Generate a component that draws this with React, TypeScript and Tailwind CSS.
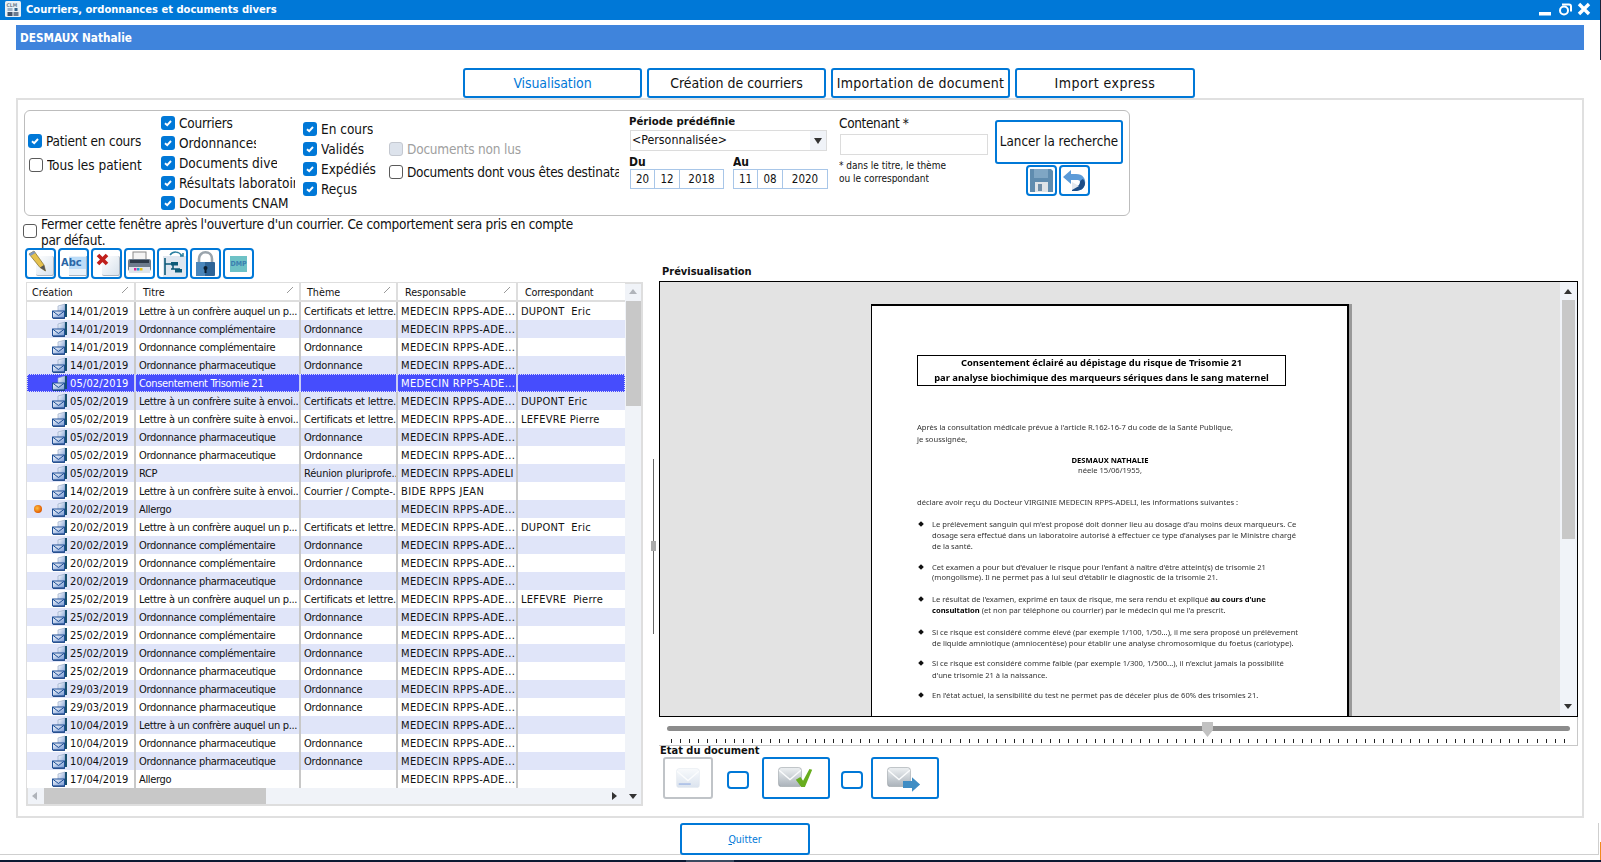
import React from "react";

type RowT = [string, string, string, string, string];
const L1 = "Lettre à un confrère auquel un p...";
const L2 = "Lettre à un confrère suite à envoi..";
const OC = "Ordonnance complémentaire";
const OP = "Ordonnance pharmaceutique";
const CE = "Certificats et lettre...";
const O = "Ordonnance";
const M = "MEDECIN RPPS-ADE...";
const rows: RowT[] = [
  ["14/01/2019", L1, CE, M, "DUPONT  Eric"],
  ["14/01/2019", OC, O, M, ""],
  ["14/01/2019", OC, O, M, ""],
  ["14/01/2019", OP, O, M, ""],
  ["05/02/2019", "Consentement Trisomie 21", "", M, ""],
  ["05/02/2019", L2, CE, M, "DUPONT Eric"],
  ["05/02/2019", L2, CE, M, "LEFEVRE Pierre"],
  ["05/02/2019", OP, O, M, ""],
  ["05/02/2019", OP, O, M, ""],
  ["05/02/2019", "RCP", "Réunion pluriprofe..", "MEDECIN RPPS-ADELI", ""],
  ["14/02/2019", L2, "Courrier / Compte-..", "BIDE RPPS JEAN", ""],
  ["20/02/2019", "Allergo", "", M, ""],
  ["20/02/2019", L1, CE, M, "DUPONT  Eric"],
  ["20/02/2019", OC, O, M, ""],
  ["20/02/2019", OC, O, M, ""],
  ["20/02/2019", OP, O, M, ""],
  ["25/02/2019", L1, CE, M, "LEFEVRE  Pierre"],
  ["25/02/2019", OC, O, M, ""],
  ["25/02/2019", OC, O, M, ""],
  ["25/02/2019", OC, O, M, ""],
  ["25/02/2019", OP, O, M, ""],
  ["29/03/2019", OP, O, M, ""],
  ["29/03/2019", OP, O, M, ""],
  ["10/04/2019", L1, "", M, ""],
  ["10/04/2019", OP, O, M, ""],
  ["10/04/2019", OP, O, M, ""],
  ["17/04/2019", "Allergo", "", M, ""],
];

function Cb({ className, on, disabled }: { className: string; on?: boolean; disabled?: boolean }) {
  const look = on
    ? "bg-[#0078d7]"
    : disabled
    ? "bg-[#dde3ec] border border-[#c4c8d0]"
    : "bg-white border border-[#5a5a5a]";
  return (
    <span className={`absolute w-[14px] h-[14px] rounded-[3px] flex items-center justify-center ${look} ${className}`}>
      {on && (
        <svg width="10" height="10" viewBox="0 0 10 10">
          <path d="M2 5.2 L4.2 7.2 L8 3" fill="none" stroke="#fff" strokeWidth="1.9" />
        </svg>
      )}
    </span>
  );
}

function Lb({ className, children }: { className: string; children: React.ReactNode }) {
  return <span className={`absolute whitespace-nowrap overflow-hidden ${className}`}>{children}</span>;
}

function MailIcon({ sel }: { sel?: boolean }) {
  const id = sel ? "mg1" : "mg0";
  return (
    <svg width="16" height="16" viewBox="0 0 16 16" className="absolute left-[25px] top-px">
      <defs>
        <linearGradient id={id} x1="0" y1="0" x2="1" y2="1">
          <stop offset="0" stopColor="#fff" />
          <stop offset="1" stopColor="#6f93d0" />
        </linearGradient>
      </defs>
      <path d="M6 3 L13 1 L13 13 L6 13 Z" fill={`url(#${id})`} stroke="#8aa0c0" strokeWidth="0.6" />
      <path d="M13 1 L15 1 L15 14 L13 14Z" fill="#174f6e" />
      <path d="M0.5 8 L12.5 8 L12.5 15 L0.5 15Z" fill={`url(#${id})`} stroke="#1e4f96" />
      <path d="M0.5 8 L6.5 12.5 L12.5 8" fill="none" stroke="#1e4f96" />
      <path d="M1 15.3 L13 15.3" stroke="#143f80" />
    </svg>
  );
}

function Row({ r, i }: { r: RowT; i: number }) {
  const sel = i === 4;
  const bg = sel ? "bg-[#464dfd] text-white" : i % 2 === 1 ? "bg-[#e0e5f9] text-[#111]" : "bg-white text-[#111]";
  const cell = "h-full overflow-hidden whitespace-pre border-r-[2px] shrink-0 " + (sel ? "border-[#c9ccf5]" : "border-[#c8c8c8]");
  return (
    <div className={`relative flex h-[18px] w-[598px] items-center leading-[19px] ${bg}`}>
      {sel && (
        <span className="absolute inset-0 border border-dotted border-white/80 pointer-events-none" />
      )}
      <div className={`${cell} relative w-[109px] pl-[43px] tracking-[0.15px]`}>
        {i === 11 && (
          <span className="absolute left-[7px] top-[5px] w-[8px] h-[8px] rounded-full bg-[radial-gradient(circle_at_40%_40%,#ffc040,#e05a00_70%,#a03000)]" />
        )}
        <MailIcon sel={sel} />
        {r[0]}
      </div>
      <div className={`${cell} w-[165px] pl-[3px] tracking-[-0.33px]`}>{r[1]}</div>
      <div className={`${cell} w-[97px] pl-[3px] tracking-[-0.2px]`}>{r[2]}</div>
      <div className={`${cell} w-[120px] pl-[3px] tracking-[0.35px]`}>{r[3]}</div>
      <div className="h-full w-[107px] pl-[3px] overflow-hidden whitespace-pre tracking-[0.25px]">{r[4]}</div>
    </div>
  );
}

function Env({ className, size = 24, pale }: { className?: string; size?: number; pale?: boolean }) {
  return (
    <svg width={size} height={size * 0.84} viewBox="0 0 44 37" className={className}>
      <defs>
        <linearGradient id={pale ? "ev1" : "ev0"} x1="0" y1="0" x2="0" y2="1">
          <stop offset="0" stopColor={pale ? "#f8fafc" : "#eef1f3"} />
          <stop offset="1" stopColor={pale ? "#dbe3ee" : "#aab2ba"} />
        </linearGradient>
      </defs>
      <rect x="1" y="1" width="42" height="35" rx="5" fill={`url(#${pale ? "ev1" : "ev0"})`} stroke={pale ? "#e2e7ee" : "#8f969c"} />
      <path d="M2 6 L22 23 L42 6" fill="none" stroke="#fbfcfd" strokeWidth="2.4" />
      {pale && <rect x="5" y="28" width="22" height="3" fill="#a9bee6" />}
    </svg>
  );
}

function Tool({ className, children }: { className: string; children: React.ReactNode }) {
  return (
    <div className={`absolute top-[248px] w-[31px] h-[31px] border-2 border-[#0078d7] rounded-[4px] bg-white overflow-hidden ${className}`}>
      {children}
    </div>
  );
}

const Sheet = () => (
  <span className="absolute left-[9px] top-[6px] w-[18px] h-[20px] rounded-[2px] bg-gradient-to-br from-white to-[#d8e2ec] border-r border-b border-[#aab4c0]" />
);

const P = ({ className, children }: { className: string; children: React.ReactNode }) => (
  <div className={`absolute whitespace-nowrap leading-[10px] ${className}`}>{children}</div>
);
const Bullet = ({ className }: { className: string }) => (
  <span className={`absolute left-[47px] w-[4px] h-[4px] rotate-45 bg-[#111] ${className}`} />
);

export default function App() {
  const ticks = Array.from({ length: 100 });
  return (
    <div className="relative w-[1601px] h-[862px] bg-white overflow-hidden text-[#111] [font-family:DejaVu_Sans_Condensed,DejaVu_Sans,sans-serif] [font-stretch:condensed]">
      {/* Title bar */}
      <div className="absolute left-0 top-0 w-[1600px] h-[20px] bg-[#0078d7]">
        <svg width="16" height="16" viewBox="0 0 16 16" className="absolute left-[5px] top-px">
          <rect width="16" height="16" rx="1.5" fill="#e8f0f6" />
          <text x="1.5" y="5.5" fontSize="5" fontWeight="700" fill="#708090">CLM</text>
          <rect x="2.5" y="11" width="5" height="4" fill="#44546a" />
          <rect x="8.5" y="11" width="5" height="4" fill="#6b7c90" />
          <rect x="2.5" y="7" width="5" height="3" fill="#9fb2c6" />
          <rect x="9.5" y="7" width="3" height="3" fill="#34648c" />
        </svg>
        <span className="absolute left-[26px] top-0 leading-[20px] text-white font-bold text-[11.1px] whitespace-nowrap">
          Courriers, ordonnances et documents divers
        </span>
        <svg width="56" height="16" viewBox="0 0 56 16" className="absolute left-[1538px] top-[2px]" fill="none">
          <rect x="1" y="10" width="12" height="3.5" fill="#fff" />
          <circle cx="26" cy="8.5" r="4" stroke="#fff" strokeWidth="2" />
          <path d="M24 2.5 h7 a2 2 0 0 1 2 2 v5" stroke="#fff" strokeWidth="2" />
          <path d="M41 2 L51 12 M51 2 L41 12" stroke="#fff" strokeWidth="3.4" />
        </svg>
      </div>
      <div className="absolute left-[1600px] top-0 w-px h-[60px] bg-[#1a2238]" />

      {/* Patient */}
      <div className="absolute left-[16px] top-[25px] w-[1568px] h-[25px] bg-[#3f84dc] text-white font-bold text-[11.7px] leading-[27px] pl-[4px]">
        DESMAUX Nathalie
      </div>

      {/* Outer panel */}
      <div className="absolute left-[16px] top-[98px] w-[1568px] h-[720px] border-2 border-[#e0e0e0]" />

      {/* Tabs */}
      <div className="absolute left-[463px] top-[68px] flex gap-[5px] text-[14px]">
        <div className="w-[179px] h-[30px] pt-px border-2 border-[#0078d7] rounded-[3px] bg-white text-[#0078d7] flex items-center justify-center whitespace-nowrap tracking-[-0.1px]">Visualisation</div>
        <div className="w-[179px] h-[30px] pt-px border-2 border-[#0078d7] rounded-[3px] bg-white flex items-center justify-center whitespace-nowrap">Création de courriers</div>
        <div className="w-[179px] h-[30px] pt-px border-2 border-[#0078d7] rounded-[3px] bg-white flex items-center justify-center whitespace-nowrap tracking-[0.28px]">Importation de document</div>
        <div className="w-[180px] h-[30px] pt-px border-2 border-[#0078d7] rounded-[3px] bg-white flex items-center justify-center whitespace-nowrap tracking-[0.45px]">Import express</div>
      </div>

      {/* Filter box */}
      <div className="absolute left-[24px] top-[110px] w-[1106px] h-[106px] border border-[#bdbdbd] rounded-[6px]" />
      <div className="text-[13.5px] leading-[18px]">
        <Cb on className="left-[28px] top-[134px]" />
        <Lb className="left-[46px] top-[132px] tracking-[-0.2px]">Patient en cours</Lb>
        <Cb className="left-[29px] top-[158px]" />
        <Lb className="left-[47px] top-[156px]">Tous les patient</Lb>

        <Cb on className="left-[161px] top-[116px]" />
        <Lb className="left-[179px] top-[114px] tracking-[-0.2px]">Courriers</Lb>
        <Cb on className="left-[161px] top-[136px]" />
        <Lb className="left-[179px] top-[134px] w-[77px]">Ordonnances</Lb>
        <Cb on className="left-[161px] top-[156px]" />
        <Lb className="left-[179px] top-[154px] w-[98px]">Documents divers</Lb>
        <Cb on className="left-[161px] top-[176px]" />
        <Lb className="left-[179px] top-[174px] w-[116px]">Résultats laboratoires</Lb>
        <Cb on className="left-[161px] top-[196px]" />
        <Lb className="left-[179px] top-[194px]">Documents CNAM</Lb>

        <Cb on className="left-[303px] top-[122px]" />
        <Lb className="left-[321px] top-[120px]">En cours</Lb>
        <Cb on className="left-[303px] top-[142px]" />
        <Lb className="left-[321px] top-[140px]">Validés</Lb>
        <Cb on className="left-[303px] top-[162px]" />
        <Lb className="left-[321px] top-[160px]">Expédiés</Lb>
        <Cb on className="left-[303px] top-[182px]" />
        <Lb className="left-[321px] top-[180px]">Reçus</Lb>

        <Cb disabled className="left-[389px] top-[142px]" />
        <Lb className="left-[407px] top-[140px] text-[#a0a0a0] tracking-[-0.2px]">Documents non lus</Lb>
        <Cb className="left-[389px] top-[165px]" />
        <Lb className="left-[407px] top-[163px] w-[212px] tracking-[-0.28px]">Documents dont vous êtes destinataire</Lb>

        <Cb className="left-[23px] top-[224px]" />
        <div className="absolute left-[41px] top-[216px] w-[535px] h-[32px] overflow-hidden leading-[16px] tracking-[-0.27px]">
          Fermer cette fenêtre après l'ouverture d'un courrier. Ce comportement sera pris en compte par défaut.
        </div>
      </div>

      <Lb className="left-[629px] top-[114px] font-bold text-[11.3px] leading-[16px]">Période prédéfinie</Lb>
      <div className="absolute left-[630px] top-[130px] w-[197px] h-[21px] border border-[#dcdcdc] text-[12.3px] leading-[18px] pl-px">
        &lt;Personnalisée&gt;
        <span className="absolute right-0 top-0 w-[16px] h-full bg-[#f0f3f8] flex items-center justify-center">
          <svg width="8" height="6" viewBox="0 0 8 6"><path d="M0 0 H8 L4 6Z" fill="#333" /></svg>
        </span>
      </div>
      <Lb className="left-[629px] top-[154px] font-bold text-[12px] leading-[16px]">Du</Lb>
      <Lb className="left-[733px] top-[154px] font-bold text-[12px] leading-[16px]">Au</Lb>
      <div className="absolute left-[630px] top-[169px] h-[20px] flex text-[11.5px] leading-[18px] text-center">
        <div className="w-[25px] border border-[#a8c6e8]">20</div>
        <div className="w-[25px] border border-l-0 border-[#a8c6e8]">12</div>
        <div className="w-[44px] border border-l-0 border-[#a8c6e8]">2018</div>
      </div>
      <div className="absolute left-[733px] top-[169px] h-[20px] flex text-[11.5px] leading-[18px] text-center">
        <div className="w-[25px] border border-[#a8c6e8]">11</div>
        <div className="w-[25px] border border-l-0 border-[#a8c6e8]">08</div>
        <div className="w-[45px] border border-l-0 border-[#a8c6e8]">2020</div>
      </div>
      <Lb className="left-[839px] top-[115px] text-[13.5px] leading-[16px] tracking-[-0.35px]">Contenant *</Lb>
      <div className="absolute left-[840px] top-[134px] w-[148px] h-[21px] border border-[#dcdcdc]" />
      <Lb className="left-[839px] top-[159px] text-[10px] leading-[14px]">* dans le titre, le thème</Lb>
      <Lb className="left-[839px] top-[172px] text-[10px] leading-[14px]">ou le correspondant</Lb>
      <div className="absolute left-[995px] top-[120px] w-[128px] h-[44px] border-2 border-[#0078d7] rounded-[3px] flex items-center justify-center text-[13.3px] whitespace-nowrap">
        Lancer la recherche
      </div>
      <div className="absolute left-[1026px] top-[165px] w-[31px] h-[31px] border-2 border-[#0078d7] rounded-[4px] overflow-hidden flex items-center justify-center">
        <svg width="25" height="25" viewBox="0 0 25 25">
          <path d="M1 1 H22 L24 3 V24 H1Z" fill="#5f8caf" />
          <rect x="5" y="1" width="14" height="9" fill="#7fa6c4" />
          <rect x="6" y="14" width="13" height="10" fill="#dfe4e8" />
          <rect x="9" y="16" width="4" height="7" fill="#6f8ea8" />
        </svg>
      </div>
      <div className="absolute left-[1059px] top-[165px] w-[31px] h-[31px] border-2 border-[#0078d7] rounded-[4px] overflow-hidden flex items-center justify-center">
        <svg width="25" height="25" viewBox="0 0 25 25">
          <path d="M1 9 L9 2 V6 H14 C21 6 24 11 23 16 C22 21 18 23 13 23 H10 V18 H14 C17 18 18 16 18 14 C18 12 16 12 14 12 H9 V16Z" fill="#5c9bd8" />
          <path d="M18 14 C18 17 16 18 14 18 H10 V23 H13 C18 23 22 21 23 16 C23 14 22 12 21 11 C19 12 18 13 18 14Z" fill="#1f4e86" />
          <path d="M10 14 L17 18 L10 22Z" fill="#e4e8ee" />
        </svg>
      </div>

      {/* Toolbar */}
      <Tool className="left-[25px]">
        <Sheet />
        <svg width="27" height="27" viewBox="0 0 27 27" className="absolute left-0 top-0">
          <path d="M2 4 L7 1 L17 15 L18.5 21 L13 17.5Z" fill="#e6c24e" stroke="#7a6a30" strokeWidth="0.7" />
          <path d="M2 4 L7 1 L8.5 3 L3.5 6Z" fill="#7f97c0" />
          <path d="M13 17.5 L18.5 21 L17 15Z" fill="#555" />
        </svg>
      </Tool>
      <Tool className="left-[58px]">
        <span className="absolute left-[9px] top-[6px] w-[18px] h-[20px] bg-[#e8f1fa] border-r border-b border-[#aab4c0]" />
        <span className="absolute left-[9px] top-[7px] w-[17px] h-[12px] bg-[#bcdcf8]" />
        <span className="absolute left-[1px] top-[5px] text-[11px] font-bold leading-[16px] text-[#2a66a6]">Abc</span>
      </Tool>
      <Tool className="left-[91px]">
        <Sheet />
        <svg width="14" height="14" viewBox="0 0 14 14" className="absolute left-[3px] top-[3px]">
          <path d="M2 2 L11 11 M11 2 L2 11" stroke="#c0201c" strokeWidth="3.6" />
        </svg>
      </Tool>
      <Tool className="left-[124px]">
        <svg width="27" height="27" viewBox="0 0 27 27" className="absolute left-0 top-0">
          <rect x="7" y="2" width="13" height="8" fill="#f4f4f4" stroke="#8a8a8a" />
          <rect x="2" y="9" width="23" height="12" rx="2" fill="#6d7c8c" />
          <rect x="4" y="10" width="19" height="3" fill="#2c3a48" />
          <rect x="3" y="17" width="21" height="6" fill="#dfe4ea" />
          <rect x="8" y="18" width="2.5" height="2.5" fill="#d02a9a" />
          <rect x="11" y="18" width="2.5" height="2.5" fill="#20a0d0" />
          <rect x="14" y="18" width="2.5" height="2.5" fill="#e0c020" />
        </svg>
      </Tool>
      <Tool className="left-[157px]">
        <span className="absolute left-[4px] top-[6px] w-[23px] h-[22px] bg-[#dfe7f0]" />
        <svg width="27" height="27" viewBox="0 0 27 27" className="absolute left-0 top-0" fill="none">
          <path d="M6 8 V25 M6 14 H14 M14 14 V19 H21 M14 19 H12" stroke="#0d5a78" strokeWidth="1.6" />
          <rect x="12" y="12" width="7" height="3.5" fill="#0d5a78" />
          <rect x="16" y="19" width="7" height="3.5" fill="#0d5a78" />
          <path d="M11 5 C14 1 20 1 23 6 M21 6 H24 V3" stroke="#2a7fa0" strokeWidth="1.5" />
        </svg>
      </Tool>
      <Tool className="left-[190px]">
        <svg width="27" height="27" viewBox="0 0 27 27" className="absolute left-0 top-0" fill="none">
          <path d="M7 13 V9 C7 0 20 0 20 9 V13" stroke="#9aa4ac" strokeWidth="2.6" />
          <rect x="4" y="12" width="19" height="14" rx="1" fill="#2f6496" />
          <rect x="4" y="12" width="9" height="14" fill="#4a86ba" />
          <circle cx="13.5" cy="18" r="2" fill="#0b1d2e" />
          <rect x="12.5" y="18" width="2" height="5" fill="#0b1d2e" />
        </svg>
      </Tool>
      <Tool className="left-[223px]">
        <span className="absolute left-[5px] top-[6px] w-[17px] h-[16px] bg-[#6ec2c6] text-[#3a7fb0] text-[7px] font-bold leading-[16px] text-center">DMP</span>
      </Tool>

      {/* Table */}
      <div className="absolute left-[26px] top-[282px] w-[617px] h-[524px] border-2 border-[#dedede] bg-[#f0f3f8]" />
      <div className="absolute left-[27px] top-[283px] w-[598px] h-[19px] bg-white flex text-[10.7px] leading-[19px] border-b-2 border-[#dedede]">
        <div className="relative w-[109px] pl-[5px] border-r-2 border-[#dedede]">Création
          <svg width="6" height="6" className="absolute right-[6px] top-[4px]"><path d="M0 6 L6 0" stroke="#999" /></svg>
        </div>
        <div className="relative w-[165px] pl-[7px] border-r-2 border-[#dedede]">Titre
          <svg width="6" height="6" className="absolute right-[6px] top-[4px]"><path d="M0 6 L6 0" stroke="#999" /></svg>
        </div>
        <div className="relative w-[97px] pl-[6px] border-r-2 border-[#dedede]">Thème
          <svg width="6" height="6" className="absolute right-[6px] top-[4px]"><path d="M0 6 L6 0" stroke="#999" /></svg>
        </div>
        <div className="relative w-[120px] pl-[7px] border-r-2 border-[#dedede]">Responsable
          <svg width="6" height="6" className="absolute right-[6px] top-[4px]"><path d="M0 6 L6 0" stroke="#999" /></svg>
        </div>
        <div className="w-[107px] pl-[7px] tracking-[-0.2px]">Correspondant</div>
      </div>
      <div className="absolute left-[27px] top-[302px] text-[11px]">
        {rows.map((r, i) => (
          <Row key={i} r={r} i={i} />
        ))}
      </div>
      {/* table scrollbars */}
      <svg width="8" height="5" className="absolute left-[629px] top-[289px]"><path d="M0 5 L4 0 L8 5Z" fill="#b0b4ba" /></svg>
      <div className="absolute left-[626px] top-[301px] w-[15px] h-[105px] bg-[#c8c8c8]" />
      <div className="absolute left-[44px] top-[788px] w-[222px] h-[16px] bg-[#c8c8c8]" />
      <svg width="5" height="8" className="absolute left-[32px] top-[792px]"><path d="M5 0 L0 4 L5 8Z" fill="#b0b4ba" /></svg>
      <svg width="5" height="8" className="absolute left-[612px] top-[792px]"><path d="M0 0 L5 4 L0 8Z" fill="#333" /></svg>
      <svg width="8" height="5" className="absolute left-[629px] top-[794px]"><path d="M0 0 H8 L4 5Z" fill="#333" /></svg>

      {/* Splitter */}
      <div className="absolute left-[653px] top-[459px] w-px h-[175px] bg-[#666]" />
      <div className="absolute left-[651px] top-[541px] w-[5px] h-[10px] bg-[#aaa]" />

      {/* Preview */}
      <Lb className="left-[662px] top-[264px] font-bold text-[11px] leading-[16px]">Prévisualisation</Lb>
      <div className="absolute left-[659px] top-[281px] w-[919px] h-[436px] border border-black bg-[#e3e3e3] overflow-hidden">
        <div className="absolute left-[211px] top-[22px] w-[478px] h-[440px] bg-white border-l border-t-2 border-r-2 border-black text-[7.6px] text-[#333] blur-[0.3px] [font-family:Noto_Sans,sans-serif] [font-stretch:normal]">
          <div className="absolute left-[45px] top-[49px] w-[369px] h-[31px] border border-black text-center font-bold text-[9.4px] text-black leading-[15px]">
            <div className="relative -top-px">Consentement éclairé au dépistage du risque de Trisomie 21</div>
            <div className="relative -top-px">par analyse biochimique des marqueurs sériques dans le sang maternel</div>
          </div>
          <P className="left-[45px] top-[116px]">Après la consultation médicale prévue à l'article R.162-16-7 du code de la Santé Publique,</P>
          <P className="left-[45px] top-[128px]">je soussignée,</P>
          <P className="left-[138px] w-[200px] text-center top-[149px] font-bold text-black">DESMAUX NATHALIE</P>
          <P className="left-[138px] w-[200px] text-center top-[159px]">néele 15/06/1955,</P>
          <P className="left-[45px] top-[191px]">déclare avoir reçu du Docteur VIRGINIE MEDECIN RPPS-ADELI, les informations suivantes :</P>
          <Bullet className="top-[216px]" />
          <P className="left-[60px] top-[213px]">Le prélèvement sanguin qui m'est proposé doit donner lieu au dosage d'au moins deux marqueurs. Ce</P>
          <P className="left-[60px] top-[224px]">dosage sera effectué dans un laboratoire autorisé à effectuer ce type d'analyses par le Ministre chargé</P>
          <P className="left-[60px] top-[235px]">de la santé.</P>
          <Bullet className="top-[259px]" />
          <P className="left-[60px] top-[256px]">Cet examen a pour but d'évaluer le risque pour l'enfant à naître d'être atteint(s) de trisomie 21</P>
          <P className="left-[60px] top-[266px]">(mongolisme). Il ne permet pas à lui seul d'établir le diagnostic de la trisomie 21.</P>
          <Bullet className="top-[291px]" />
          <P className="left-[60px] top-[288px]">Le résultat de l'examen, exprimé en taux de risque, me sera rendu et expliqué <b className="text-black">au cours d'une</b></P>
          <P className="left-[60px] top-[299px]"><b className="text-black">consultation</b> (et non par téléphone ou courrier) par le médecin qui me l'a prescrit.</P>
          <Bullet className="top-[324px]" />
          <P className="left-[60px] top-[321px]">Si ce risque est considéré comme élevé (par exemple 1/100, 1/50...), il me sera proposé un prélèvement</P>
          <P className="left-[60px] top-[332px]">de liquide amniotique (amniocentèse) pour établir une analyse chromosomique du foetus (cariotype).</P>
          <Bullet className="top-[355px]" />
          <P className="left-[60px] top-[352px]">Si ce risque est considéré comme faible (par exemple 1/300, 1/500...), il n'exclut jamais la possibilité</P>
          <P className="left-[60px] top-[364px]">d'une trisomie 21 à la naissance.</P>
          <Bullet className="top-[387px]" />
          <P className="left-[60px] top-[384px]">En l'état actuel, la sensibilité du test ne permet pas de déceler plus de 60% des trisomies 21.</P>
        </div>
        <div className="absolute left-[689px] top-[22px] w-[3px] h-[440px] bg-[#999]" />
        <div className="absolute right-0 top-0 w-[17px] h-full bg-[#f0f3f8]" />
        <div className="absolute right-[2px] top-[18px] w-[13px] h-[239px] bg-[#c8c8c8]" />
        <svg width="8" height="5" className="absolute right-[5px] top-[7px]"><path d="M0 5 L4 0 L8 5Z" fill="#333" /></svg>
        <svg width="8" height="5" className="absolute right-[5px] bottom-[7px]"><path d="M0 0 H8 L4 5Z" fill="#333" /></svg>
      </div>

      {/* Slider */}
      <div className="absolute left-[667px] top-[726px] w-[903px] h-[5px] rounded-full bg-[#8c8c8c]" />
      <svg width="11" height="15" className="absolute left-[1202px] top-[722px]"><path d="M0 0 H11 V8 L5.5 15 L0 8Z" fill="#c2c2c2" /></svg>
      <div className="absolute left-[671px] top-[739px] w-[895px] flex justify-between">
        {ticks.map((_, i) => (
          <span key={i} className="w-px h-[4px] bg-[#222]" />
        ))}
      </div>
      <div className="absolute left-[659px] top-[745px] w-[919px] h-px bg-[#c8c8c8]" />
      <div className="absolute left-[1577px] top-[717px] w-px h-[28px] bg-[#c8c8c8]" />

      {/* Etat */}
      <Lb className="left-[660px] top-[743px] font-bold text-[11px] leading-[16px]">Etat du document</Lb>
      <div className="absolute left-[663px] top-[757px] w-[50px] h-[42px] border-2 border-[#c0c4c8] rounded-[3px] flex items-center justify-center">
        <Env pale size={24} />
      </div>
      <div className="absolute left-[727px] top-[771px] w-[22px] h-[18px] border-2 border-[#0078d7] rounded-[4px]" />
      <div className="absolute left-[762px] top-[757px] w-[68px] h-[42px] border-2 border-[#0078d7] rounded-[3px]">
        <Env size={24} className="absolute left-[14px] top-[8px]" />
        <svg width="20" height="20" viewBox="0 0 22 22" className="absolute left-[30px] top-[9px]">
          <path d="M2 13 L7 10 L10 14 L17 1 L20 2 L12 21 L8 21Z" fill="#68ad1e" />
        </svg>
      </div>
      <div className="absolute left-[841px] top-[771px] w-[22px] h-[18px] border-2 border-[#0078d7] rounded-[4px]" />
      <div className="absolute left-[871px] top-[757px] w-[68px] h-[42px] border-2 border-[#0078d7] rounded-[3px]">
        <Env size={24} className="absolute left-[14px] top-[8px]" />
        <svg width="18" height="15" viewBox="0 0 20 16" className="absolute left-[30px] top-[18px]">
          <path d="M0 4 H10 V0 L19 8 L10 16 V12 H0Z" fill="#3f8dc4" />
        </svg>
      </div>

      {/* Quit */}
      <div className="absolute left-[680px] top-[823px] w-[130px] h-[32px] pt-px border-2 border-[#0078d7] rounded-[3px] bg-white flex items-center justify-center text-[#0078d7] text-[10.5px] z-10">
        <span><span className="underline">Q</span>uitter</span>
      </div>

      {/* Bottom edge */}
      <div className="absolute left-0 top-[854px] w-[1599px] h-px bg-[#cfcfcf]" />
      <div className="absolute left-[1598px] top-[823px] w-px h-[32px] bg-[#cfcfcf]" />
      <div className="absolute left-0 top-[860px] w-[1601px] h-[2px] bg-[#0c1a33]" />
      <div className="absolute left-[686px] top-[860px] w-[48px] h-[2px] bg-[#3a4a60]" />
      <div className="absolute left-[1600px] top-[842px] w-px h-[18px] bg-[#f08a1c]" />
    </div>
  );
}
